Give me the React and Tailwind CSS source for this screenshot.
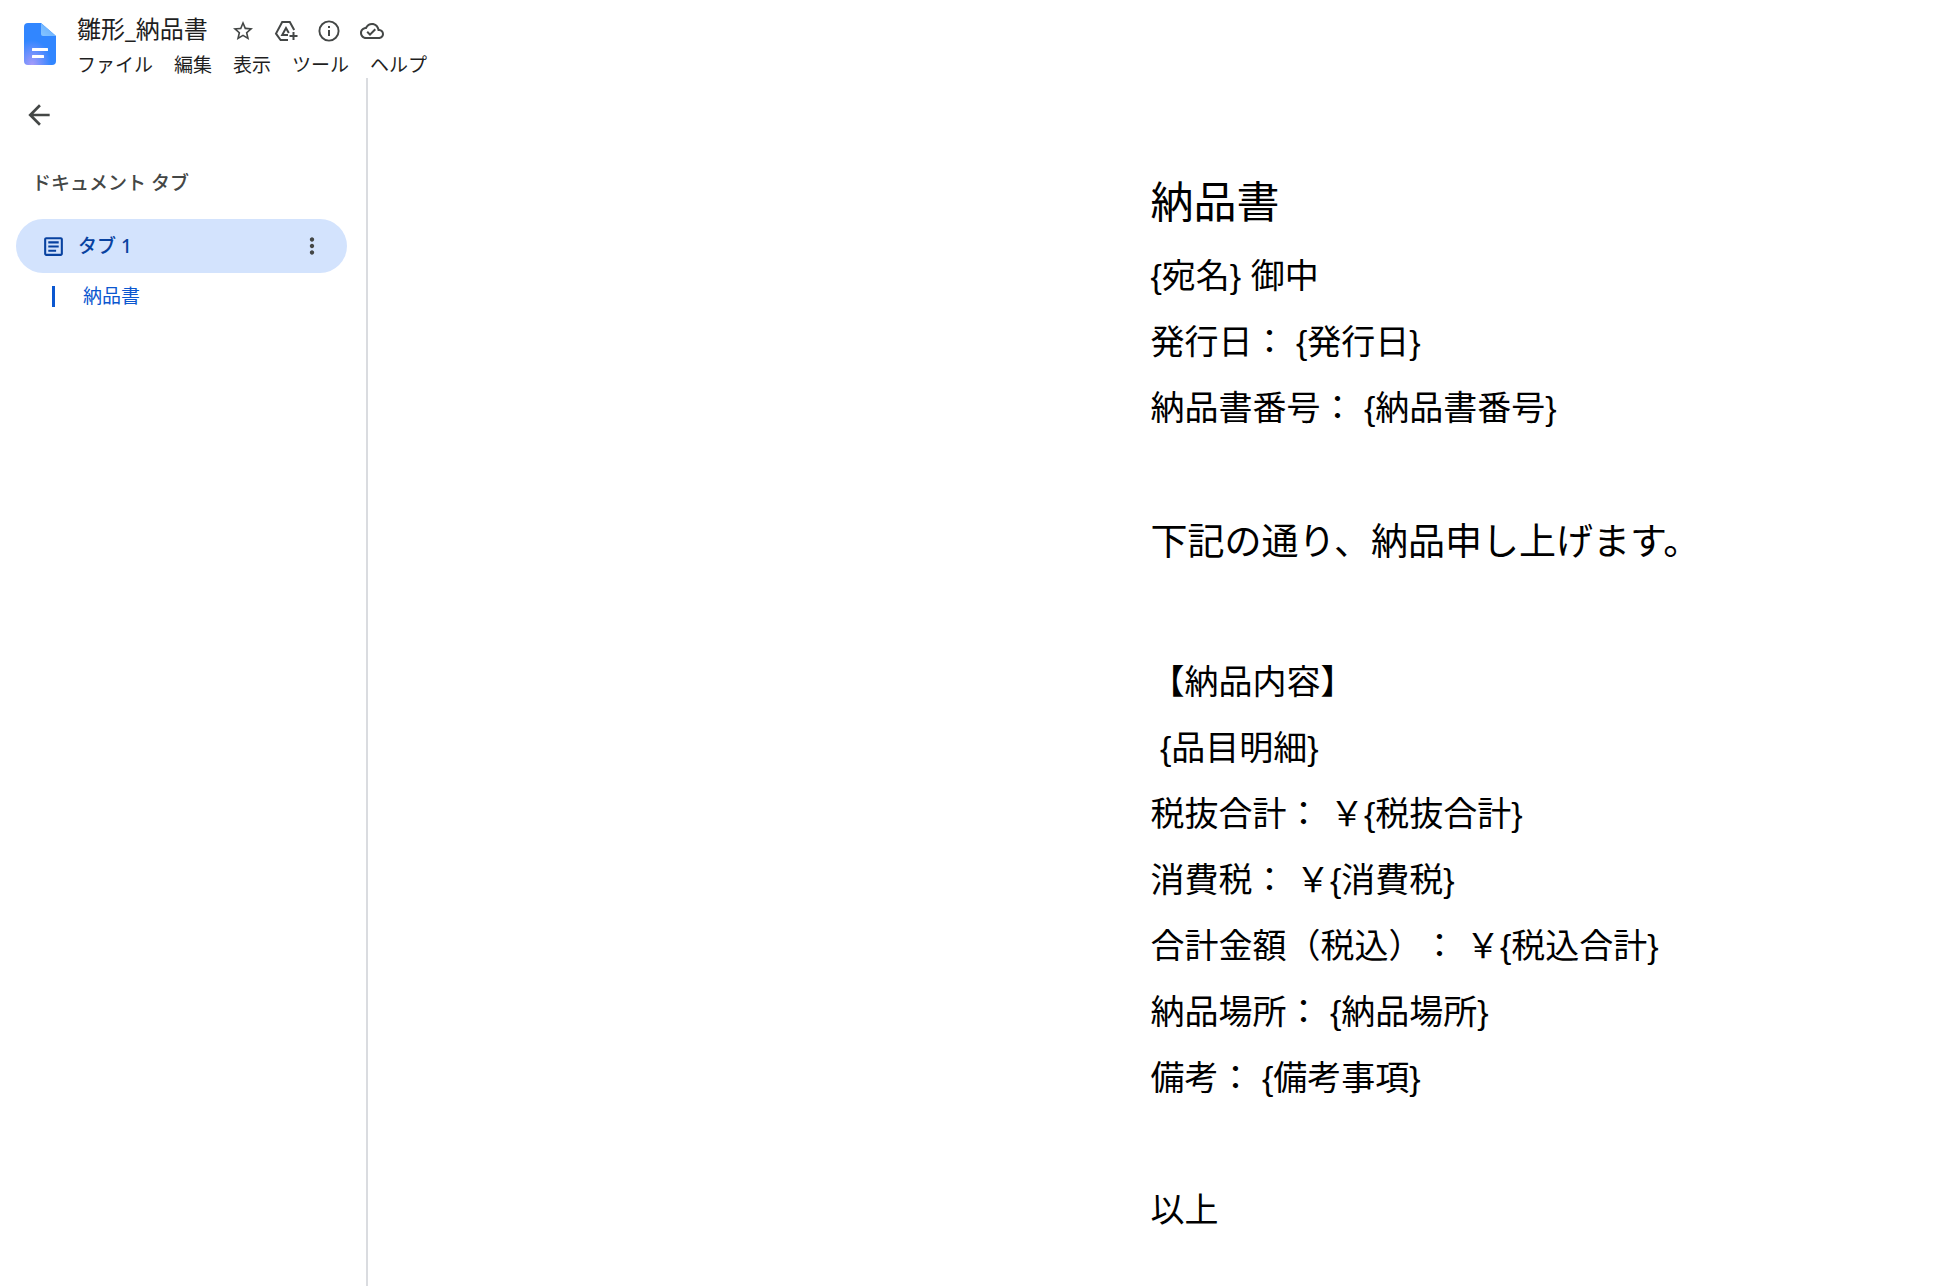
const menus = ["ファイル", "編集", "表示", "ツール", "ヘルプ"];

const small = "text-[34px] leading-[66px]";
const large = "text-[37px] leading-[71px]";
const lines = [
  ["{宛名} 御中", small],
  ["発行日： {発行日}", small],
  ["納品書番号： {納品書番号}", small],
  ["\u00a0", small],
  ["下記の通り、納品申し上げます。", large],
  ["\u00a0", large],
  ["【納品内容】", small],
  [" {品目明細}", small],
  ["税抜合計： ￥{税抜合計}", small],
  ["消費税： ￥{消費税}", small],
  ["合計金額（税込）： ￥{税込合計}", small],
  ["納品場所： {納品場所}", small],
  ["備考： {備考事項}", small],
  ["\u00a0", small],
  ["以上", small],
];

function DocsLogo() {
  return (
    <svg className="h-[42px] w-8" viewBox="0 0 32 42" aria-hidden="true">
      <defs>
        <radialGradient id="glow" cx="0.25" cy="1" r="0.6">
          <stop offset="0" stopColor="#a79bfa" />
          <stop offset="1" stopColor="#3186ff" />
        </radialGradient>
        <linearGradient id="fold" x1="0" y1="1" x2="1" y2="0">
          <stop offset="0" stopColor="#86c5ff" />
          <stop offset="1" stopColor="#5fa8ff" />
        </linearGradient>
      </defs>
      <path d="M4 0h13l15 13v25a4 4 0 0 1-4 4H4a4 4 0 0 1-4-4V4a4 4 0 0 1 4-4z" fill="url(#glow)" />
      <path d="M17 0l15 13H19a2 2 0 0 1-2-2z" fill="url(#fold)" />
      <rect x="8" y="25" width="16" height="3" rx="0.5" fill="#fff" />
      <rect x="8" y="32" width="12" height="3" rx="0.5" fill="#fff" />
    </svg>
  );
}

function Icon({ children, className = "size-6" }) {
  return (
    <svg className={className} viewBox="0 0 24 24" fill="currentColor" aria-hidden="true">
      {children}
    </svg>
  );
}

const actions = [
  ["スター", <path d="M22 9.24l-7.19-.62L12 2 9.19 8.63 2 9.24l5.46 4.73L5.82 21 12 17.27 18.18 21l-1.63-7.03L22 9.24zM12 15.4l-3.76 2.27 1-4.28-3.32-2.88 4.38-.38L12 6.1l1.71 4.04 4.38.38-3.32 2.88 1 4.28L12 15.4z" />],
  ["ドライブに追加", (
    <g fill="none" stroke="currentColor" strokeWidth="2">
      <path d="M14 21H6.600L2 14.600 8.200 3h7.600l4.400 8" />
      <path d="M14 16H8.200L12 9l2.800 5" />
      <path d="M19.500 13v8M15.500 17h8" />
    </g>
  )],
  ["詳細", (
    <g>
      <circle cx="12" cy="12" r="9.600" fill="none" stroke="currentColor" strokeWidth="1.900" />
      <path d="M11 7h2v2h-2zm0 4h2v6h-2z" />
    </g>
  )],
  ["保存状況", <path d="M19.35 10.04C18.67 6.59 15.64 4 12 4 9.11 4 6.6 5.64 5.35 8.04 2.34 8.36 0 10.91 0 14c0 3.31 2.69 6 6 6h13c2.76 0 5-2.24 5-5 0-2.64-2.05-4.78-4.65-4.96zM19 18H6c-2.21 0-4-1.79-4-4 0-2.05 1.53-3.76 3.56-3.97l1.07-.11.5-.95C8.08 7.14 9.94 6 12 6c2.62 0 4.88 1.86 5.39 4.43l.3 1.5 1.53.11c1.56.1 2.78 1.41 2.78 2.96 0 1.65-1.35 3-3 3zm-9-3.82l-2.09-2.09L6.5 13.5 10 17l6.01-6.01-1.41-1.41z" />],
];

export default function App() {
  return (
    <div className='flex min-h-screen flex-col bg-white font-["Noto_Sans","Noto_Sans_CJK_JP",sans-serif] text-[#1f1f1f]'>
      <header className="flex h-[78px] items-start pl-6">
        <a href="#home" aria-label="ドキュメント ホーム" className="mt-[23px] mr-[21px]">
          <DocsLogo />
        </a>
        <div className="pt-[11px]">
          <div className="flex items-start">
            <h1 className="text-2xl leading-9">雛形_納品書</h1>
            <div className="mt-2 ml-[23px] flex gap-[19px] text-[#444746]">
              {actions.map(([label, shape]) => (
                <button key={label} aria-label={label}>
                  <Icon>{shape}</Icon>
                </button>
              ))}
            </div>
          </div>
          <nav className="flex gap-[21px] pt-0.5">
            {menus.map((m) => (
              <button key={m} className="text-[19px] leading-8">{m}</button>
            ))}
          </nav>
        </div>
      </header>
      <div className="flex flex-1">
        <aside className="w-[368px] shrink-0 border-r-2 border-[#dadce0] pr-[19px] pl-4">
          <button aria-label="戻る" className="mt-[21px] ml-[7px] block text-[#444746]">
            <Icon className="size-8">
              <path d="M20 11H7.83l5.59-5.59L12 4l-8 8 8 8 1.41-1.41L7.83 13H20v-2z" />
            </Icon>
          </button>
          <h2 className="mt-9 ml-4 text-[19px] leading-8 font-medium text-[#444746]">ドキュメント タブ</h2>
          <div className="mt-5 flex h-[54px] items-center rounded-full bg-[#d3e3fd] pr-[22px] pl-[25px] text-[#0842a0]">
            <button className="flex flex-1 items-center gap-3 text-[19px] font-medium">
              <Icon className="size-[25px]">
                <path d="M19 5v14H5V5h14m0-2H5c-1.100 0-2 .9-2 2v14c0 1.100.9 2 2 2h14c1.100 0 2-.9 2-2V5c0-1.100-.9-2-2-2zM14.500 17H7v-2h7.500v2zm2.500-4H7v-2h10v2zm0-4H7V7h10v2z" />
              </Icon>
              タブ 1
            </button>
            <button aria-label="タブのオプション" className="text-[#444746]">
              <Icon className="size-[26px]">
                <path d="M12 8c1.100 0 2-.9 2-2s-.9-2-2-2-2 .9-2 2 .9 2 2 2zm0 2c-1.100 0-2 .9-2 2s.9 2 2 2 2-.9 2-2-.9-2-2-2zm0 6c-1.100 0-2 .9-2 2s.9 2 2 2 2-.9 2-2-.9-2-2-2z" />
              </Icon>
            </button>
          </div>
          <a href="#doc" className="mt-[7px] ml-9 flex h-8 items-center text-[19px] text-[#0b57d0]">
            <span className="mr-7 h-[21px] w-[3px] bg-[#0b57d0]" />
            納品書
          </a>
        </aside>
        <main id="doc" className="min-w-0 flex-1">
          <article className='pt-[86px] pl-[calc(50%-4px)] font-["Liberation_Sans","Noto_Sans_CJK_JP",sans-serif] whitespace-pre text-black [text-spacing-trim:space-all]'>
            <h1 className="text-[43px] leading-[79px]">納品書</h1>
            {lines.map(([text, size], i) => (
              <p key={i} className={size}>{text}</p>
            ))}
          </article>
        </main>
      </div>
    </div>
  );
}
